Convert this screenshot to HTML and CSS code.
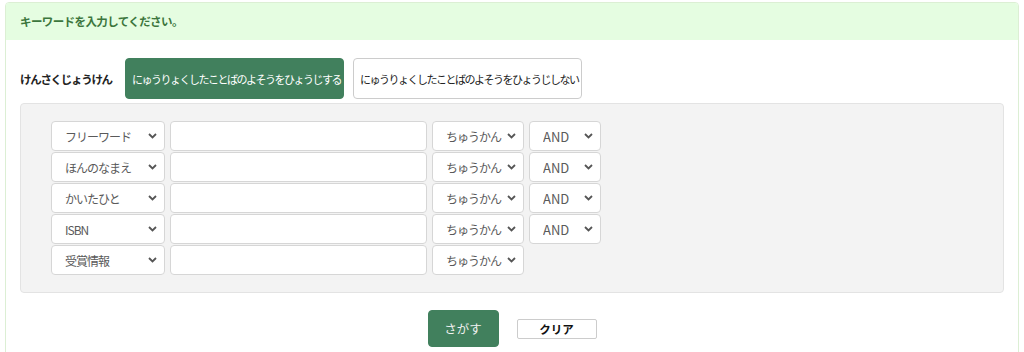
FILE: index.html
```html
<!DOCTYPE html>
<html lang="ja">
<head>
    <meta charset="UTF-8">
    <meta name="viewport" content="width=device-width, initial-scale=1.0">
    <title>けんさく</title>
    <link rel="stylesheet" href="styles.css">
</head>
<body>
    <div class="panel">
        <div class="panel-heading">キーワードを入力してください。</div>
        <div class="panel-body">
            <div class="mode-row">
                <span class="mode-label">けんさくじょうけん</span>
                <button class="mode-btn active" type="button">にゅうりょくしたことばのよそうをひょうじする</button>
                <button class="mode-btn" type="button">にゅうりょくしたことばのよそうをひょうじしない</button>
            </div>
            <div class="cond-box">
                <div class="cond-row">
                    <select class="sel-field"><option>フリーワード</option></select>
                    <input class="txt" type="text">
                    <select class="sel-match"><option>ちゅうかん</option></select>
                    <select class="sel-op"><option>AND</option></select>
                </div>
                <div class="cond-row">
                    <select class="sel-field"><option>ほんのなまえ</option></select>
                    <input class="txt" type="text">
                    <select class="sel-match"><option>ちゅうかん</option></select>
                    <select class="sel-op"><option>AND</option></select>
                </div>
                <div class="cond-row">
                    <select class="sel-field"><option>かいたひと</option></select>
                    <input class="txt" type="text">
                    <select class="sel-match"><option>ちゅうかん</option></select>
                    <select class="sel-op"><option>AND</option></select>
                </div>
                <div class="cond-row">
                    <select class="sel-field"><option>ISBN</option></select>
                    <input class="txt" type="text">
                    <select class="sel-match"><option>ちゅうかん</option></select>
                    <select class="sel-op"><option>AND</option></select>
                </div>
                <div class="cond-row">
                    <select class="sel-field"><option>受賞情報</option></select>
                    <input class="txt" type="text">
                    <select class="sel-match"><option>ちゅうかん</option></select>
                </div>
            </div>
            <div class="actions">
                <button class="search-btn" type="submit">さがす</button>
                <button class="clear-btn" type="reset">クリア</button>
            </div>
            <div class="section-title">ジャンル</div>
        </div>
    </div>
</body>
</html>
```

FILE: styles.css
```css
body { margin: 0; padding: 2px 5px 0 5px; background: #fff; font-family: "Noto Sans CJK JP", "Noto Sans", sans-serif; font-size: 12px; color: #333; }
.panel { border: 1px solid #dcefd4; border-radius: 4px; overflow: hidden; }
.panel-heading { background: #e5fde1; color: #3c763d; font-weight: bold; font-size: 11.5px; letter-spacing: -0.6px; height: 37px; line-height: 37px; padding: 0 14px; }
.panel-body { padding: 18px 14px 0 14px; }
.mode-row { display: flex; align-items: center; gap: 9px; }
.mode-label { font-weight: bold; font-size: 11.5px; color: #222; width: 96px; letter-spacing: -1.3px; white-space: nowrap; }
.mode-btn { font-family: inherit; font-size: 11px; letter-spacing: -1.5px; white-space: nowrap; height: 41px; padding: 0 6px; border: 1px solid #ccc; border-radius: 4px; background: #fff; color: #222; }
.mode-btn.active { background: #41805d; border-color: #41805d; color: #fff; width: 219px; }
.mode-btn + .mode-btn { width: 229px; }
.cond-box { margin-top: 4px; background: #f3f3f3; border: 1px solid #e3e3e3; border-radius: 4px; padding: 17px 30px 17px 30px; display: flex; flex-direction: column; gap: 1px; }
.cond-row { display: flex; gap: 5px; }
.cond-row select, .cond-row input { font-family: inherit; font-size: 12px; color: #5a5a5a; height: 30px; border: 1px solid #d6d6d6; border-radius: 4px; background-color: #fff; box-sizing: border-box; }
.cond-row select {
    -webkit-appearance: none;
    appearance: none;
    padding: 0 18px 0 13px;
    letter-spacing: -1px;
    background-image: url("data:image/svg+xml,%3Csvg xmlns='http://www.w3.org/2000/svg' width='9' height='6' viewBox='0 0 9 6'%3E%3Cpath d='M1 1l3.5 3.5L8 1' fill='none' stroke='%23555' stroke-width='1.8'/%3E%3C/svg%3E");
    background-repeat: no-repeat;
    background-position: right 7px center;
}
.sel-field { width: 114px; }
.txt { width: 257px; padding: 0 6px; }
.sel-match { width: 92px; }
.sel-op { width: 72px; font-size: 13px !important; letter-spacing: 0 !important; }
.actions { display: flex; justify-content: center; align-items: center; gap: 18px; margin-top: 17px; }
.search-btn { font-family: inherit; font-size: 12.5px; width: 71px; height: 37px; background: #41805d; border: 1px solid #41805d; color: #f2f2f2; border-radius: 4px; }
.clear-btn { font-family: inherit; font-size: 11.5px; font-weight: bold; width: 80px; height: 20px; padding: 0; background: #fff; border: 1px solid #ccc; border-radius: 2px; color: #111; }
.section-title { font-weight: bold; margin-top: 4px; padding-left: 1px; color: #222; }
```
